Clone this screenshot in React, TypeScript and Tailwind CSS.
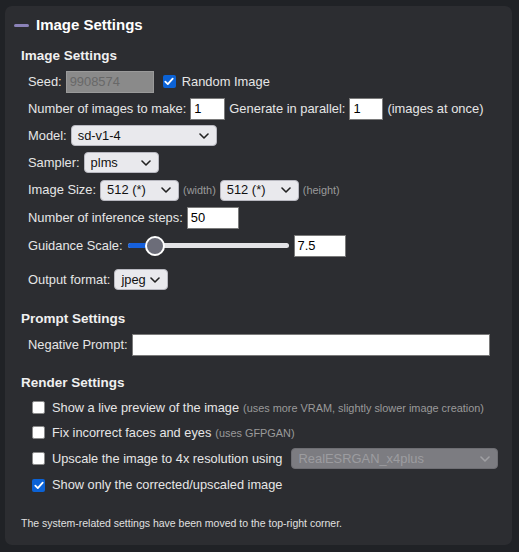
import React from 'react';

const font = { fontFamily: '"Liberation Sans", Arial, sans-serif' };

const Chevron: React.FC<{ className?: string }> = ({ className }) => (
  <svg className={className} width="10" height="6" viewBox="0 0 10 6" fill="none">
    <path d="M1 1l4 4 4-4" stroke="currentColor" strokeWidth="1.6" strokeLinecap="round" strokeLinejoin="round" />
  </svg>
);

const Select: React.FC<{ value: string; width: string; disabled?: boolean }> = ({ value, width, disabled }) => (
  <div
    className={
      'flex items-center justify-between h-[21px] rounded-[4px] border pl-[6px] pr-[7px] text-[12.9px] ' +
      width +
      (disabled
        ? ' bg-[#7c7c81] border-[#6e6e73] text-[#9c9ca0]'
        : ' bg-[#e9e9ed] border-[#b8b8c0] text-[#111]')
    }
  >
    <span>{value}</span>
    <Chevron className={disabled ? 'text-[#a0a0a4]' : 'text-[#222]'} />
  </div>
);

const TextBox: React.FC<{ value?: string; width: string }> = ({ value = '', width }) => (
  <div className={'flex items-center h-[22px] bg-white border border-[#7a7a7a] px-[3px] text-[12.9px] text-black ' + width}>
    {value}
  </div>
);

const Checkbox: React.FC<{ checked?: boolean }> = ({ checked }) =>
  checked ? (
    <div className="w-[13px] h-[13px] rounded-[2px] bg-[#0b62d6] flex items-center justify-center shrink-0">
      <svg width="10" height="9" viewBox="0 0 10 9" fill="none">
        <path d="M1.3 4.6l2.5 2.5L8.7 1.6" stroke="white" strokeWidth="1.8" strokeLinecap="round" strokeLinejoin="round" />
      </svg>
    </div>
  ) : (
    <div className="w-[13px] h-[13px] rounded-[2px] bg-white border border-[#8a8a8a] shrink-0" />
  );

const Row: React.FC<{ children: React.ReactNode; className?: string }> = ({ children, className = '' }) => (
  <div className={'flex items-center h-[27px] pl-[23px] text-[12.9px] text-[#e6e6e6] ' + className}>{children}</div>
);

const Hint: React.FC<{ children: React.ReactNode }> = ({ children }) => (
  <span className="text-[10.9px] text-[#9a9a9a]">{children}</span>
);

export default function App() {
  return (
    <div className="w-[519px] h-[552px] bg-[#202226] pt-[6px] pl-[5px]" style={font}>
      <div className="w-[507px] h-[539px] bg-[#2c2d31] rounded-[7px] pt-[9px]">
        {/* panel header */}
        <div className="flex items-center h-[20px] pl-[9px]">
          <div className="w-[15px] h-[3px] rounded-full bg-[#8b82b8]" />
          <span className="ml-[7px] text-[15px] font-bold text-white">Image Settings</span>
        </div>

        <div className="pl-[16px] mt-[11px] h-[20px] flex items-center text-[13.5px] font-bold text-[#f0f0f0]">
          Image Settings
        </div>

        <div className="mt-[2px]">
          <Row>
            <span>Seed:</span>
            <div className="ml-[4px] flex items-center h-[22px] w-[88px] bg-[#8a8a8a] border border-[#9a9a9a] px-[3px] text-[12.9px] text-[#686868]">
              9908574
            </div>
            <div className="ml-[9px]">
              <Checkbox checked />
            </div>
            <span className="ml-[6px]">Random Image</span>
          </Row>
          <Row>
            <span>Number of images to make:</span>
            <TextBox value="1" width="w-[35px] ml-[4px]" />
            <span className="ml-[4px]">Generate in parallel:</span>
            <TextBox value="1" width="w-[34px] ml-[4px]" />
            <span className="ml-[4px]">(images at once)</span>
          </Row>
          <Row>
            <span>Model:</span>
            <div className="ml-[4px]">
              <Select value="sd-v1-4" width="w-[146px]" />
            </div>
          </Row>
          <Row>
            <span>Sampler:</span>
            <div className="ml-[4px]">
              <Select value="plms" width="w-[75px]" />
            </div>
          </Row>
          <Row className="h-[28px]">
            <span>Image Size:</span>
            <div className="ml-[4px]">
              <Select value="512 (*)" width="w-[79px]" />
            </div>
            <span className="ml-[4px]">
              <Hint>(width)</Hint>
            </span>
            <div className="ml-[4px]">
              <Select value="512 (*)" width="w-[79px]" />
            </div>
            <span className="ml-[4px]">
              <Hint>(height)</Hint>
            </span>
          </Row>
          <Row className="h-[28px]">
            <span>Number of inference steps:</span>
            <TextBox value="50" width="w-[52px] ml-[4px]" />
          </Row>
          <Row>
            <span>Guidance Scale:</span>
            <div className="relative ml-[5px] w-[161px] h-[22px] flex items-center">
              <div className="w-full h-[5px] rounded-full bg-[#e3e3e6]" />
              <div className="absolute left-0 top-[8.5px] w-[28px] h-[5px] rounded-l-full bg-[#1660dc]" />
              <div className="absolute left-[17px] top-[1px] w-[20px] h-[20px] rounded-full bg-[#6c6d79] border-2 border-white" />
            </div>
            <TextBox value="7.5" width="w-[52px] ml-[5px]" />
          </Row>
          <Row className="mt-[7px]">
            <span>Output format:</span>
            <div className="ml-[4px]">
              <Select value="jpeg" width="w-[54px]" />
            </div>
          </Row>
        </div>

        <div className="pl-[16px] mt-[16px] h-[20px] flex items-center text-[13.5px] font-bold text-[#f0f0f0]">
          Prompt Settings
        </div>
        <Row className="mt-[2px]">
          <span>Negative Prompt:</span>
          <TextBox width="w-[358px] ml-[4px]" />
        </Row>

        <div className="pl-[16px] mt-[15px] h-[20px] flex items-center text-[13.5px] font-bold text-[#f0f0f0]">
          Render Settings
        </div>
        <div className="mt-[2px] pl-[27px] text-[12.8px] text-[#e6e6e6]">
          <div className="flex items-center h-[25px]">
            <Checkbox />
            <span className="ml-[7px]">Show a live preview of the image</span>
            <span className="ml-[4px]">
              <Hint>(uses more VRAM, slightly slower image creation)</Hint>
            </span>
          </div>
          <div className="flex items-center h-[25px]">
            <Checkbox />
            <span className="ml-[7px]">Fix incorrect faces and eyes</span>
            <span className="ml-[4px]">
              <Hint>(uses GFPGAN)</Hint>
            </span>
          </div>
          <div className="flex items-center h-[27px]">
            <Checkbox />
            <span className="ml-[7px]">Upscale the image to 4x resolution using</span>
            <div className="ml-[9px]">
              <Select value="RealESRGAN_x4plus" width="w-[207px]" disabled />
            </div>
          </div>
          <div className="flex items-center h-[26px]">
            <Checkbox checked />
            <span className="ml-[7px]">Show only the corrected/upscaled image</span>
          </div>
        </div>

        <div className="pl-[16px] mt-[18px] text-[10.5px] text-[#e0e0e0]">
          The system-related settings have been moved to the top-right corner.
        </div>
      </div>
    </div>
  );
}
